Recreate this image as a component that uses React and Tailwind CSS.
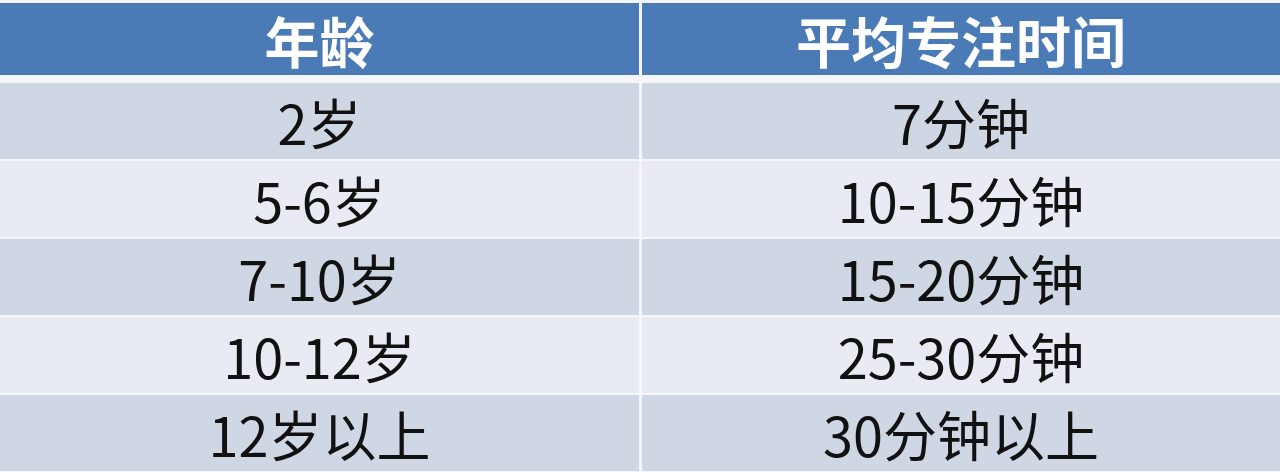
import React from 'react';

const rows = [
  ['2岁', '7分钟'],
  ['5-6岁', '10-15分钟'],
  ['7-10岁', '15-20分钟'],
  ['10-12岁', '25-30分钟'],
  ['12岁以上', '30分钟以上'],
];

export default function App() {
  return (
    <div
      className="w-[1280px] h-[472px] overflow-hidden bg-[#f4f6fa] pt-[3px] flex flex-col"
      style={{ fontFamily: '"Noto Sans CJK SC", "Noto Sans", sans-serif' }}
    >
      {/* Header */}
      <div className="grid grid-cols-[639px_1fr] gap-x-[3px] h-[72px]">
        <div className="bg-[#4b7bb6] flex items-center justify-center text-white font-bold text-[55px] leading-none">
          年龄
        </div>
        <div className="bg-[#4b7bb6] flex items-center justify-center text-white font-bold text-[55px] leading-none">
          平均专注时间
        </div>
      </div>

      {/* Rows */}
      <div className="flex flex-col gap-y-[2px] mt-[8px]">
        {rows.map(([age, time], i) => (
          <div key={i} className="grid grid-cols-[639px_1fr] gap-x-[3px] h-[76px]">
            <div
              className={`${i % 2 === 0 ? 'bg-[#d0d7e4]' : 'bg-[#e8ebf3]'} flex items-center justify-center text-[#111] text-[54px] leading-none pt-[2px]`}
            >
              {age}
            </div>
            <div
              className={`${i % 2 === 0 ? 'bg-[#d0d7e4]' : 'bg-[#e8ebf3]'} flex items-center justify-center text-[#111] text-[54px] leading-none pt-[2px]`}
            >
              {time}
            </div>
          </div>
        ))}
      </div>
    </div>
  );
}
